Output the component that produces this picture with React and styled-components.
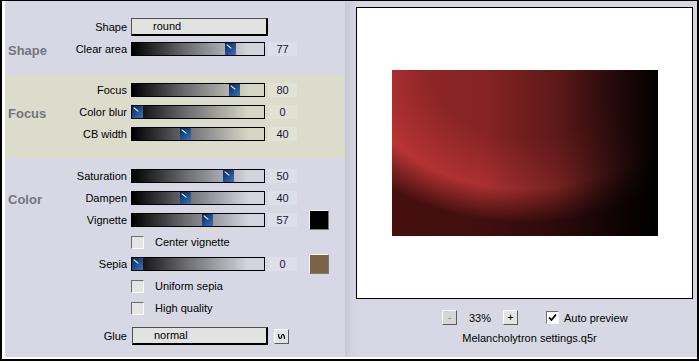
import React from 'react';
import styled, { createGlobalStyle } from 'styled-components';

const Global = createGlobalStyle`
  html, body { margin: 0; padding: 0; background: #fff; }
  body { font-family: "Liberation Sans", Arial, sans-serif; font-size: 11px; color: #000; }
  * { box-sizing: border-box; }
`;

const tones = {
  lav: { bg: '#d8d8e4', light: '#d4d4de', value: '#dedee8' },
  khaki: { bg: '#dcdccc', light: '#d6d6c4', value: '#e2e2d4' },
};

const Frame = styled.div`
  width: 699px;
  height: 361px;
  border: 2px solid #000;
  border-top-width: 1px;
  padding: 0 0 2px 3px;
  background: #fff;
  display: flex;
`;

const LeftPanel = styled.div`
  width: 340px;
  display: flex;
  flex-direction: column;
  background: #d8d8e4;
`;

const Section = styled.div`
  padding: ${(p) => p.$pad};
  background: ${(p) => tones[p.$tone].bg};
  flex: ${(p) => (p.$grow ? 1 : 'none')};
`;

const Row = styled.div`
  display: flex;
  align-items: center;
  height: 22px;
  margin-top: ${(p) => p.$mt || 0}px;
`;

const Title = styled.div`
  width: 65px;
  padding-left: 3px;
  padding-top: ${(p) => p.$dy || 0}px;
  font-family: "Liberation Sans", Arial, sans-serif;
  font-weight: bold;
  font-size: 13px;
  color: #74747f;
`;

const Label = styled.div`
  width: 57px;
  margin-right: 4px;
  text-align: right;
  white-space: nowrap;
`;

const Track = styled.div`
  position: relative;
  width: 134px;
  height: 14px;
  border: 1px solid #000;
  background: linear-gradient(
    to right,
    #000 0%,
    #6a6a70 40%,
    ${(p) => tones[p.$tone].light} 88%,
    ${(p) => tones[p.$tone].light} 100%
  );
`;

const Thumb = styled.div`
  position: absolute;
  top: 0;
  width: 11px;
  height: 12px;
  background: linear-gradient(135deg, #0c2448 0%, #1d4a86 45%, #3b73b8 100%);
  &::after {
    content: '';
    position: absolute;
    left: 1px;
    top: 3px;
    width: 6px;
    height: 1px;
    background: #fff;
    transform: rotate(40deg);
  }
`;

const Value = styled.div`
  width: 29px;
  height: 14px;
  margin-left: 3px;
  background: ${(p) => tones[p.$tone].value};
  color: #14143a;
  text-align: center;
  line-height: 14px;
`;

const Swatch = styled.div`
  width: 20px;
  height: 20px;
  margin-left: 12px;
  background: ${(p) => p.$color};
  border: 1px solid;
  border-color: #f4f4f8 #7a7a80 #7a7a80 #f4f4f8;
`;

const Select = styled.div`
  width: ${(p) => p.$w}px;
  height: 18px;
  margin-left: ${(p) => p.$ml || 0}px;
  background: #e2e2e2;
  border-style: solid;
  border-color: #505050 #000 #000 #505050;
  border-width: 1px 2px 2px 1px;
  padding-left: 21px;
  line-height: 15px;
  font-size: 11px;
  color: #000;
`;

const Box = styled.div`
  width: 13px;
  height: 13px;
  margin-left: ${(p) => p.$ml || 0}px;
  background: ${(p) => (p.$on ? '#fff' : '#e4e4e4')};
  border: 1px solid;
  border-color: #6e6e6e #fafafa #fafafa #6e6e6e;
  display: flex;
  align-items: center;
  justify-content: center;
`;

const CheckText = styled.span`
  margin-left: ${(p) => p.$gap}px;
  white-space: nowrap;
`;

const TinyButton = styled.div`
  width: 15px;
  height: 15px;
  margin-left: ${(p) => p.$ml || 0}px;
  background: ${(p) => (p.$disabled ? '#d6d6da' : '#e4e4e6')};
  border: 1px solid;
  border-color: #fafafa #5a5a5a #5a5a5a #fafafa;
  color: ${(p) => (p.$disabled ? '#8a8a8a' : '#000')};
  display: flex;
  align-items: center;
  justify-content: center;
  font-size: 11px;
  line-height: 1;
`;

const RightPanel = styled.div`
  flex: 1;
  display: flex;
  flex-direction: column;
  padding: 6px 4px 0 11px;
  background: linear-gradient(to right, #c8c8d4 0px, #d2d2de 6px, #d8d8e4 14px);
`;

const Preview = styled.div`
  width: 337px;
  height: 292px;
  border: 1px solid #000;
  background: #fff;
  display: flex;
  align-items: center;
  justify-content: center;
`;

const Picture = styled.div`
  width: 266px;
  height: 166px;
  background:
    linear-gradient(
      to right,
      rgba(0, 0, 0, 0) 0%,
      rgba(0, 0, 0, 0.08) 35%,
      rgba(0, 0, 0, 0.36) 62%,
      rgba(0, 0, 0, 0.8) 86%,
      #000 100%
    ),
    radial-gradient(
      ellipse 80% 92% at 50% 0%,
      rgba(0, 0, 0, 0) 0%,
      rgba(0, 0, 0, 0) 44%,
      rgba(222, 66, 66, 0.5) 78%,
      rgba(20, 0, 0, 0.6) 100%
    ),
    #922626;
`;

const Controls = styled.div`
  display: flex;
  align-items: center;
  margin-top: 11px;
  padding-left: 86px;
  height: 15px;
`;

const Zoom = styled.span`
  margin: 0 12px;
  width: 22px;
  color: #000;
`;

const FileName = styled.div`
  margin-top: 7px;
  padding-left: 10px;
  width: 337px;
  text-align: center;
  white-space: nowrap;
`;

const Slider = ({ label, value, pos, tone, title, swatch }) => (
  <Row>
    <Title $dy={title ? 2 : 0}>{title}</Title>
    <Label>{label}</Label>
    <Track $tone={tone}>
      <Thumb style={{ left: `${(pos / 100) * 121}px` }} />
    </Track>
    <Value $tone={tone}>{value}</Value>
    {swatch && <Swatch $color={swatch} />}
  </Row>
);

const Check = ({ label }) => (
  <Row>
    <Title />
    <Label />
    <Box />
    <CheckText $gap={11}>{label}</CheckText>
  </Row>
);

const LinkIcon = () => (
  <svg width="9" height="9" viewBox="0 0 9 9">
    <path d="M1.5 2 C1.5 7.5 4.5 7.5 4.5 4.5 C4.5 1.5 7.5 1.5 7.5 7" fill="none" stroke="#000" strokeWidth="1.2" />
  </svg>
);

export default function App() {
  return (
    <>
      <Global />
      <Frame>
        <LeftPanel>
          <Section $tone="lav" $pad="15px 0 15px 0">
            <Row>
              <Title />
              <Label>Shape</Label>
              <Select $w={137}>round</Select>
            </Row>
            <Slider title="Shape" label="Clear area" value="77" pos={77} tone="lav" />
          </Section>
          <Section $tone="khaki" $pad="4px 0 13px 0">
            <Slider label="Focus" value="80" pos={80} tone="khaki" />
            <Slider title="Focus" label="Color blur" value="0" pos={0} tone="khaki" />
            <Slider label="CB width" value="40" pos={40} tone="khaki" />
          </Section>
          <Section $tone="lav" $pad="7px 0 0 0" $grow>
            <Slider label="Saturation" value="50" pos={75} tone="lav" />
            <Slider title="Color" label="Dampen" value="40" pos={40} tone="lav" />
            <Slider label="Vignette" value="57" pos={58} tone="lav" swatch="#000" />
            <Check label="Center vignette" />
            <Slider label="Sepia" value="0" pos={0} tone="lav" swatch="#7b6246" />
            <Check label="Uniform sepia" />
            <Check label="High quality" />
            <Row $mt={6}>
              <Title />
              <Label>Glue</Label>
              <Select $w={136} $ml={1}>normal</Select>
              <TinyButton $ml={6}>
                <LinkIcon />
              </TinyButton>
            </Row>
          </Section>
        </LeftPanel>
        <RightPanel>
          <Preview>
            <Picture />
          </Preview>
          <Controls>
            <TinyButton $disabled>-</TinyButton>
            <Zoom>33%</Zoom>
            <TinyButton>+</TinyButton>
            <Box $on $ml={28}>
              <svg width="9" height="9" viewBox="0 0 9 9">
                <path d="M1 4.5 L3.5 7 L8 1.5" fill="none" stroke="#000" strokeWidth="1.8" />
              </svg>
            </Box>
            <CheckText $gap={5}>Auto preview</CheckText>
          </Controls>
          <FileName>Melancholytron settings.q5r</FileName>
        </RightPanel>
      </Frame>
    </>
  );
}
